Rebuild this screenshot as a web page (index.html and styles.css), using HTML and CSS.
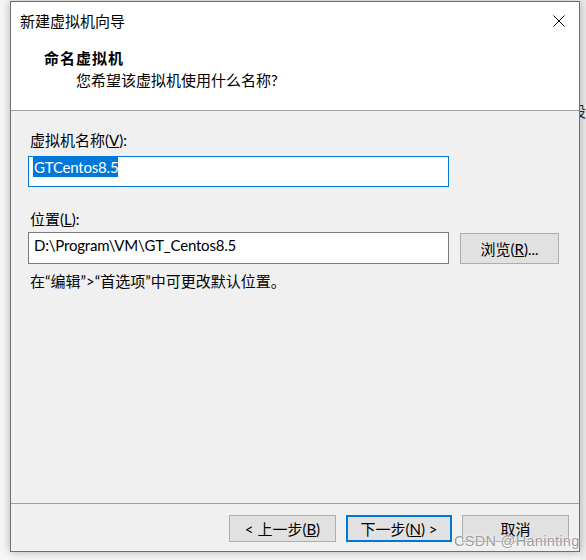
FILE: index.html
```html
<!DOCTYPE html>
<html>
<head>
<meta charset="utf-8">
<link rel="stylesheet" href="styles.css">
</head>
<body>
<div class="screen">
  <div class="window">
    <div class="titlebar">
      <span class="title">新建虚拟机向导</span>
      <svg class="close" width="12" height="12" viewBox="0 0 12 12"><path d="M0.5 0.5L11.5 11.5M11.5 0.5L0.5 11.5" stroke="#000" stroke-width="1" fill="none"/></svg>
    </div>
    <div class="header">
      <div class="h-title">命名虚拟机</div>
      <div class="h-sub">您希望该虚拟机使用什么名称?</div>
    </div>
    <div class="body">
      <div class="label">虚拟机名称(<u>V</u>):</div>
      <div class="input focused"><span class="sel">GTCentos8.5</span></div>
      <div class="label label-loc">位置(<u>L</u>):</div>
      <div class="row">
        <div class="input loc">D:\Program\VM\GT_Centos8.5</div>
        <div class="btn browse">浏览(<u>R</u>)...</div>
      </div>
      <div class="hint">在“编辑”&gt;“首选项”中可更改默认位置。</div>
    </div>
    <div class="footer">
      <div class="btn">&lt; 上一步(<u>B</u>)</div>
      <div class="btn primary">下一步(<u>N</u>) &gt;</div>
      <div class="btn">取消</div>
    </div>
  </div>
  <div class="side"><span class="side-char">设</span></div>
  <div class="watermark">CSDN @Haninting</div>
</div>
</body>
</html>
```

FILE: styles.css
```css
* { box-sizing: border-box; }
html, body { margin: 0; padding: 0; }
body {
  background: #f8f8f8;
  font-family: "Lato", "Noto Sans CJK SC", sans-serif;
  font-size: 15px;
  color: #000;
}
.screen {
  width: 586px;
  height: 560px;
  position: relative;
  overflow: hidden;
  display: flex;
  align-items: flex-start;
  background: #f6f6f6;
}
.window {
  position: relative;
  z-index: 1;
  margin-left: 10px;
  margin-top: 1px;
  width: 570px;
  height: 551px;
  border: 1px solid #6f6f6f;
  background: #f0f0f0;
  display: flex;
  flex-direction: column;
  box-shadow: 0 0 9px rgba(0,0,0,0.28);
  flex: none;
}
.titlebar {
  height: 38px;
  background: #fff;
  display: flex;
  align-items: flex-start;
  justify-content: space-between;
  padding: 9px 14px 0 9px;
}
.title { line-height: 20px; }
.close { margin-top: 4px; display: block; }
.header {
  background: #fff;
  height: 71px;
  border-bottom: 1px solid #a0a0a0;
  padding: 8px 0 0 33px;
}
.h-title {
  font-weight: bold;
  line-height: 20px;
  letter-spacing: 1px;
}
.h-sub {
  line-height: 20px;
  margin-top: 2px;
  padding-left: 32px;
}
.body {
  flex: 1;
  padding: 19px 0 0 17px;
}
.label { line-height: 20px; padding-left: 2px; }
.input {
  width: 421px;
  height: 31px;
  background: #fff;
  border: 1px solid #7a7a7a;
  padding: 0 0 0 4px;
  line-height: 20px;
  white-space: nowrap;
  letter-spacing: -0.2px;
}
.input.focused {
  margin-top: 6px;
  border-color: #0078d7;
}
.sel {
  display: inline-block;
  background: #0078d7;
  color: #fff;
  height: 20px;
  line-height: 20px;
  padding-left: 1px;
}
.label-loc { margin-top: 22px; }
.row {
  display: flex;
  align-items: flex-start;
  gap: 11px;
  margin-top: 3px;
}
.input.loc { padding-top: 2px; padding-left: 5px; height: 32px; }
.btn {
  height: 27px;
  width: 107px;
  background: #e1e1e1;
  border: 1px solid #adadad;
  display: flex;
  align-items: center;
  justify-content: center;
  line-height: 20px;
  white-space: nowrap;
}
.btn.browse { width: 99px; height: 31px; margin-top: 1px; }
.btn.primary { border: 2px solid #0078d7; width: 106px; }
.hint { line-height: 20px; margin-top: 7px; padding-left: 2px; }
.footer {
  border-top: 1px solid #a0a0a0;
  height: 48px;
  display: flex;
  justify-content: flex-end;
  gap: 10px;
  padding: 11px 10px 0 0;
}
.side {
  flex: 1;
  height: 560px;
  background: #ececec;
  position: relative;
}
.side-char {
  position: absolute;
  left: -9px;
  top: 100px;
  font-size: 15px;
  color: #1f2f3f;
}
.watermark {
  position: absolute;
  z-index: 2;
  left: 454px;
  top: 533px;
  font-size: 14.5px;
  color: #9c9c9c;
  font-family: "Liberation Sans", sans-serif;
  text-shadow: 0 0 1px #fff, 0 0 2px #fff;
  letter-spacing: 0.3px;
}
```
